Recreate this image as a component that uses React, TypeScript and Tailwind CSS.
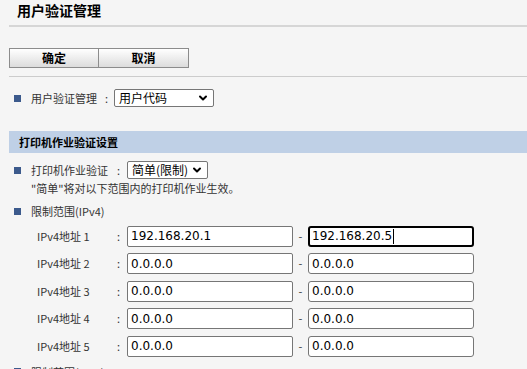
import { ChevronDown } from "lucide-react";

const cjk = "font-['Microsoft_YaHei','Noto_Sans_CJK_SC',sans-serif]";

const ranges = [
  { from: "192.168.20.1", to: "192.168.20.5", focus: true },
  { from: "0.0.0.0", to: "0.0.0.0" },
  { from: "0.0.0.0", to: "0.0.0.0" },
  { from: "0.0.0.0", to: "0.0.0.0" },
  { from: "0.0.0.0", to: "0.0.0.0" }
];

function Bullet() {
  return <span className="mr-[10px] h-[7px] w-[7px] shrink-0 bg-[#3c5a8c]" />;
}

function Select({ value, width }: { value: string; width: string }) {
  return (
    <div
      className={`flex h-[18px] shrink-0 items-center justify-between rounded-[2px] border border-[#767676] bg-white pl-[4px] pr-[4px] text-[12px] whitespace-nowrap text-black ${width}`}
    >
      <span className="leading-none">{value}</span>
      <ChevronDown className="size-[12px] shrink-0" strokeWidth={4} />
    </div>
  );
}

export default function App() {
  return (
    <div className={`h-[369px] w-full overflow-hidden bg-[#f5f5f5] text-[11px] text-[#333] ${cjk}`}>
      <h1 className="pl-[17px] pt-[1px] text-[14px] leading-[18px] font-bold text-black">用户验证管理</h1>
      <div className="mt-[6px] ml-[9px] h-[2px] bg-[#d6d6d6]" />

      <div className="mt-[21px] ml-[9px] flex">
        <button className="h-[20px] w-[90px] border border-[#8c8c8c] bg-gradient-to-b from-white to-[#dcdcdc] text-[12px] font-bold text-black">
          确定
        </button>
        <button className="h-[20px] w-[90px] border border-l-0 border-[#8c8c8c] bg-gradient-to-b from-white to-[#dcdcdc] text-[12px] font-bold text-black">
          取消
        </button>
      </div>
      <div className="mt-[8px] ml-[9px] h-px bg-[#cccccc]" />

      <div className="mt-[12px] flex items-center pl-[14px]">
        <Bullet />
        <span className="w-[74px] whitespace-nowrap">用户验证管理</span>
        <span className="w-[9px]">:</span>
        <Select value="用户代码" width="w-[100px]" />
      </div>

      <div className="mt-[24px] ml-[9px] flex h-[22px] items-center bg-[#bfd0e6] pl-[10px] font-bold text-black">
        打印机作业验证设置
      </div>

      <div className="mt-[8px] flex items-center pl-[14px]">
        <Bullet />
        <span className="w-[86px] whitespace-nowrap">打印机作业验证</span>
        <span className="w-[10px]">:</span>
        <Select value="简单(限制)" width="w-[81px]" />
      </div>
      <p className="mt-[1px] pl-[31px] leading-[16px]">"简单"将对以下范围内的打印机作业生效。</p>

      <div className="mt-[7px] flex items-center pl-[14px]">
        <Bullet />
        <span>限制范围(IPv4)</span>
      </div>

      <div className="mt-[6px] flex flex-col gap-[6.5px]">
        {ranges.map((r, i) => (
          <div key={i} className="flex h-[21px] items-center pl-[37px]">
            <span className="w-[80px] whitespace-nowrap">IPv4地址 {i + 1}</span>
            <span className="w-[10px]">:</span>
            <div className="flex h-[21px] w-[166px] items-center rounded-[2px] border border-[#767676] bg-white pl-[3px] font-['DejaVu_Sans',sans-serif] text-[12px] leading-none text-black">
              {r.from}
            </div>
            <span className="w-[15px] text-center">-</span>
            <div
              className={`flex h-[21px] w-[166px] items-center rounded-[3px] bg-white font-['DejaVu_Sans',sans-serif] text-[12px] leading-none text-black ${
                r.focus ? "border-2 border-black pl-[2px]" : "border border-[#767676] pl-[3px]"
              }`}
            >
              {r.to}
              {r.focus && <span className="ml-px h-[15px] w-px bg-black" />}
            </div>
          </div>
        ))}
      </div>

      <div className="mt-[7px] flex items-center pl-[14px]">
        <Bullet />
        <span>限制范围(IPv6)</span>
      </div>
    </div>
  );
}
